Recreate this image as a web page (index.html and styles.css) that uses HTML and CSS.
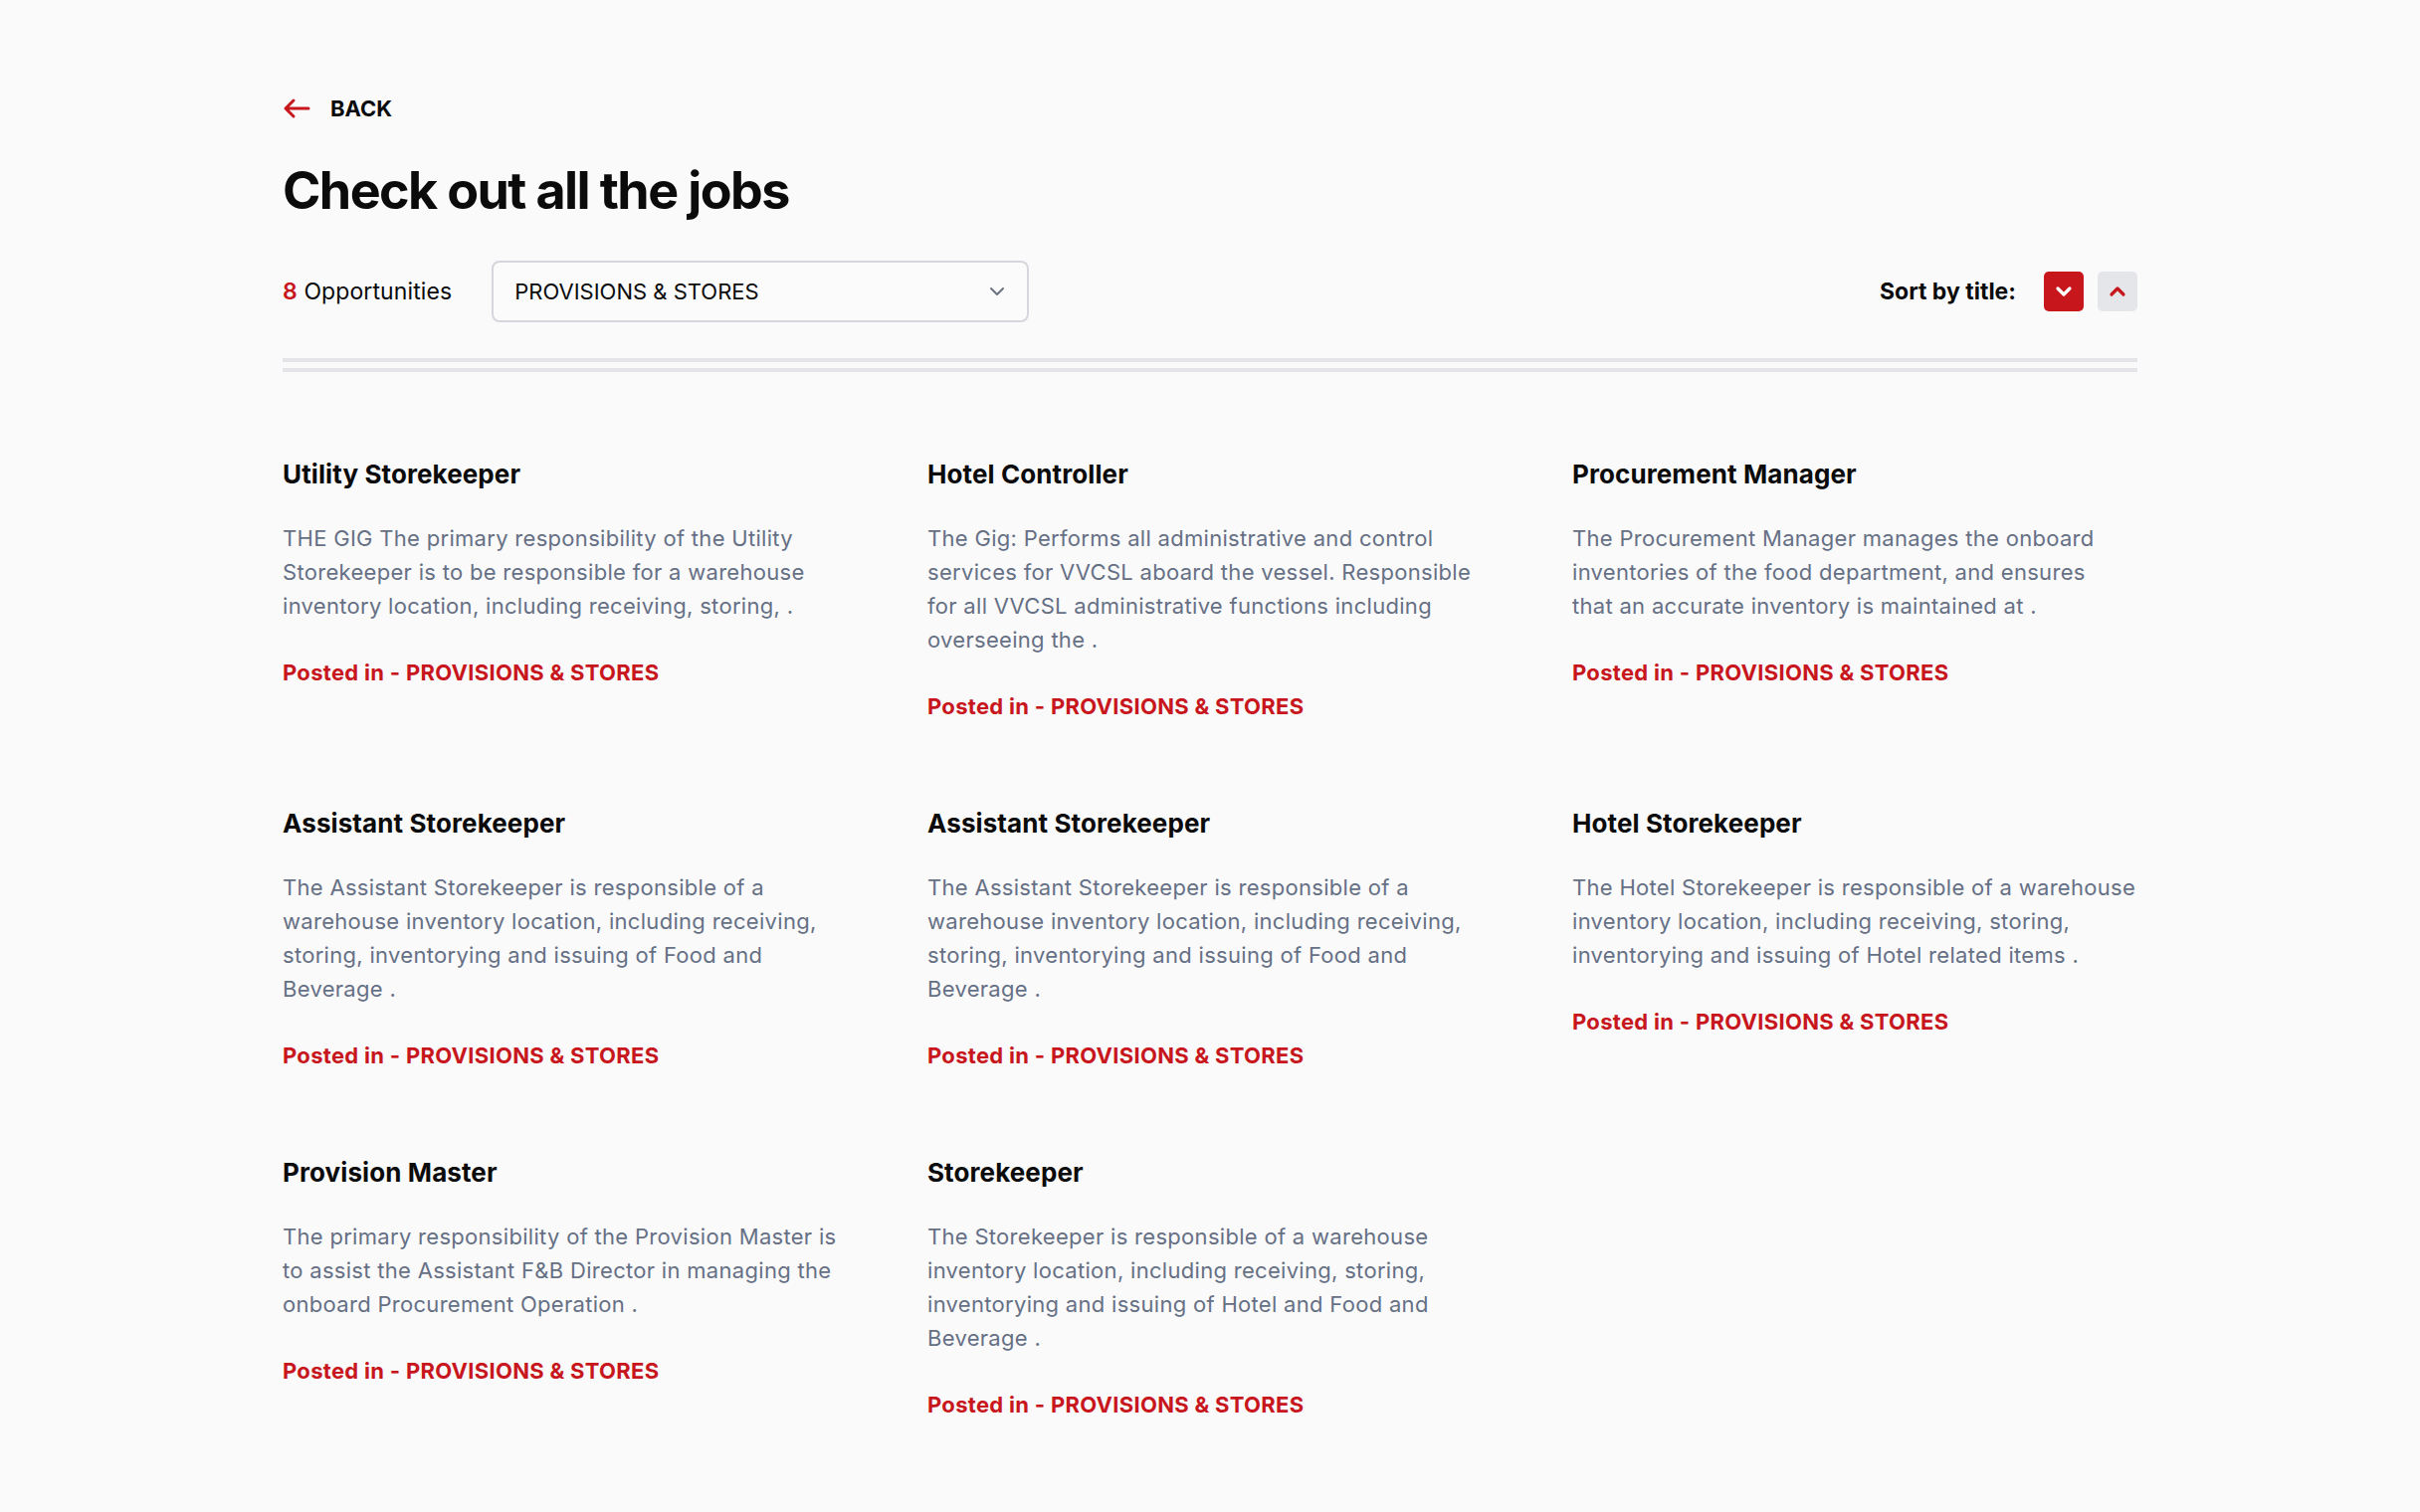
FILE: index.html
```html
<!DOCTYPE html>
<html lang="en">
<head>
    <meta charset="UTF-8">
    <meta name="viewport" content="width=device-width, initial-scale=1.0">
    <title>Check out all the jobs</title>
    <link rel="stylesheet" href="styles.css">
</head>
<body>

    <div class="page">

        <!-- Back link -->
        <a href="#" class="back-link">
            <svg width="28" height="22" viewBox="0 0 28 22" fill="none" stroke="#c8161d" stroke-width="3" stroke-linecap="round" stroke-linejoin="round">
                <path d="M26 11H3M11 3L3 11L11 19"/>
            </svg>
            <span>BACK</span>
        </a>

        <h1 class="page-title">Check out all the jobs</h1>

        <!-- Filter and sort bar -->
        <div class="filter-bar">
            <div class="filter-left">
                <span class="job-count"><strong>8</strong> Opportunities</span>
                <div class="select-box">
                    <span>PROVISIONS &amp; STORES</span>
                    <svg width="16" height="10" viewBox="0 0 16 10" fill="none" stroke="#6b7280" stroke-width="2" stroke-linecap="round" stroke-linejoin="round">
                        <path d="M2 2L8 8L14 2"/>
                    </svg>
                </div>
            </div>
            <div class="sort">
                <span class="sort-label">Sort by title:</span>
                <button class="sort-btn active">
                    <svg width="18" height="12" viewBox="0 0 18 12" fill="none" stroke="#ffffff" stroke-width="3.2" stroke-linecap="round" stroke-linejoin="round">
                        <path d="M3 3L9 9L15 3"/>
                    </svg>
                </button>
                <button class="sort-btn">
                    <svg width="18" height="12" viewBox="0 0 18 12" fill="none" stroke="#c8161d" stroke-width="3.2" stroke-linecap="round" stroke-linejoin="round">
                        <path d="M3 9L9 3L15 9"/>
                    </svg>
                </button>
            </div>
        </div>

        <div class="divider"></div>

        <!-- Job list -->
        <div class="job-grid">
            <div class="job-card">
                <h3 class="job-title">Utility Storekeeper</h3>
                <p class="job-desc">THE GIG The primary responsibility of the Utility Storekeeper is to be responsible for a warehouse inventory location, including receiving, storing, .</p>
                <p class="job-posted">Posted in - PROVISIONS &amp; STORES</p>
            </div>
            <div class="job-card">
                <h3 class="job-title">Hotel Controller</h3>
                <p class="job-desc">The Gig: Performs all administrative and control services for VVCSL aboard the vessel. Responsible for all VVCSL administrative functions including overseeing the .</p>
                <p class="job-posted">Posted in - PROVISIONS &amp; STORES</p>
            </div>
            <div class="job-card">
                <h3 class="job-title">Procurement Manager</h3>
                <p class="job-desc">The Procurement Manager manages the onboard inventories of the food department, and ensures<br>that an accurate inventory is maintained at .</p>
                <p class="job-posted">Posted in - PROVISIONS &amp; STORES</p>
            </div>
            <div class="job-card">
                <h3 class="job-title">Assistant Storekeeper</h3>
                <p class="job-desc">The Assistant Storekeeper is responsible of a warehouse inventory location, including receiving, storing, inventorying and issuing of Food and Beverage .</p>
                <p class="job-posted">Posted in - PROVISIONS &amp; STORES</p>
            </div>
            <div class="job-card">
                <h3 class="job-title">Assistant Storekeeper</h3>
                <p class="job-desc">The Assistant Storekeeper is responsible of a warehouse inventory location, including receiving, storing, inventorying and issuing of Food and Beverage .</p>
                <p class="job-posted">Posted in - PROVISIONS &amp; STORES</p>
            </div>
            <div class="job-card">
                <h3 class="job-title">Hotel Storekeeper</h3>
                <p class="job-desc">The Hotel Storekeeper is responsible of a warehouse inventory location, including receiving, storing, inventorying and issuing of Hotel related items .</p>
                <p class="job-posted">Posted in - PROVISIONS &amp; STORES</p>
            </div>
            <div class="job-card">
                <h3 class="job-title">Provision Master</h3>
                <p class="job-desc">The primary responsibility of the Provision Master is to assist the Assistant F&amp;B Director in managing the onboard Procurement Operation .</p>
                <p class="job-posted">Posted in - PROVISIONS &amp; STORES</p>
            </div>
            <div class="job-card">
                <h3 class="job-title">Storekeeper</h3>
                <p class="job-desc">The Storekeeper is responsible of a warehouse inventory location, including receiving, storing, inventorying and issuing of Hotel and Food and Beverage .</p>
                <p class="job-posted">Posted in - PROVISIONS &amp; STORES</p>
            </div>
        </div>

    </div>

</body>
</html>
```

FILE: styles.css
```css
/* General reset */
* {
    margin: 0;
    padding: 0;
    box-sizing: border-box;
}

:root {
    --background: #fafafb;
    --text-dark: #0b0b0c;
    --text-muted: #667085;
    --accent: #c8161d;
    --line: #e4e4e9;
    --button-grey: #e5e6ea;
}

body {
    font-family: "Inter", "Open Sans", sans-serif;
    background-color: var(--background);
    color: var(--text-dark);
}

/* Page container */
.page {
    max-width: 1864px;
    margin: 0 auto;
    padding: 93px 0 120px;
}

/* Back link */
.back-link {
    display: flex;
    align-items: center;
    gap: 20px;
    height: 32px;
    font-size: 22px;
    font-weight: 700;
    color: var(--text-dark);
    text-decoration: none;
}

.page-title {
    margin-top: 33px;
    font-size: 52px;
    line-height: 67px;
    font-weight: 700;
    letter-spacing: -1.6px;
}

/* Filter bar */
.filter-bar {
    display: flex;
    justify-content: space-between;
    align-items: center;
    margin-top: 37px;
}

.filter-left {
    display: flex;
    align-items: center;
    gap: 40px;
}

.job-count {
    font-size: 23px;
    letter-spacing: 0.1px;
}

.job-count strong {
    color: var(--accent);
    font-weight: 600;
}

.select-box {
    display: flex;
    justify-content: space-between;
    align-items: center;
    width: 540px;
    height: 62px;
    padding: 0 22px 0 21px;
    border: 2px solid #d5d7dc;
    border-radius: 8px;
    font-size: 22px;
    background: #fbfbfc;
}

.sort {
    display: flex;
    align-items: center;
}

.sort-label {
    font-size: 23px;
    font-weight: 700;
    margin-right: 28px;
}

.sort-btn {
    display: flex;
    align-items: center;
    justify-content: center;
    width: 40px;
    height: 40px;
    border: none;
    border-radius: 5px;
    background-color: var(--button-grey);
    cursor: pointer;
}

.sort-btn + .sort-btn {
    margin-left: 14px;
}

.sort-btn.active {
    background-color: var(--accent);
}

/* Double divider */
.divider {
    height: 14px;
    margin-top: 36px;
    border-top: 4px solid var(--line);
    border-bottom: 4px solid var(--line);
}

/* Job grid */
.job-grid {
    display: grid;
    grid-template-columns: repeat(3, 568px);
    column-gap: 80px;
    row-gap: 84px;
    margin-top: 86px;
}

.job-title {
    font-size: 26px;
    line-height: 34px;
    font-weight: 700;
    letter-spacing: 0.1px;
}

.job-desc {
    margin-top: 30px;
    font-size: 22px;
    line-height: 34px;
    letter-spacing: 0.3px;
    color: var(--text-muted);
}

.job-posted {
    margin-top: 33px;
    font-size: 22px;
    line-height: 34px;
    font-weight: 700;
    letter-spacing: 0.3px;
    color: var(--accent);
}
```
